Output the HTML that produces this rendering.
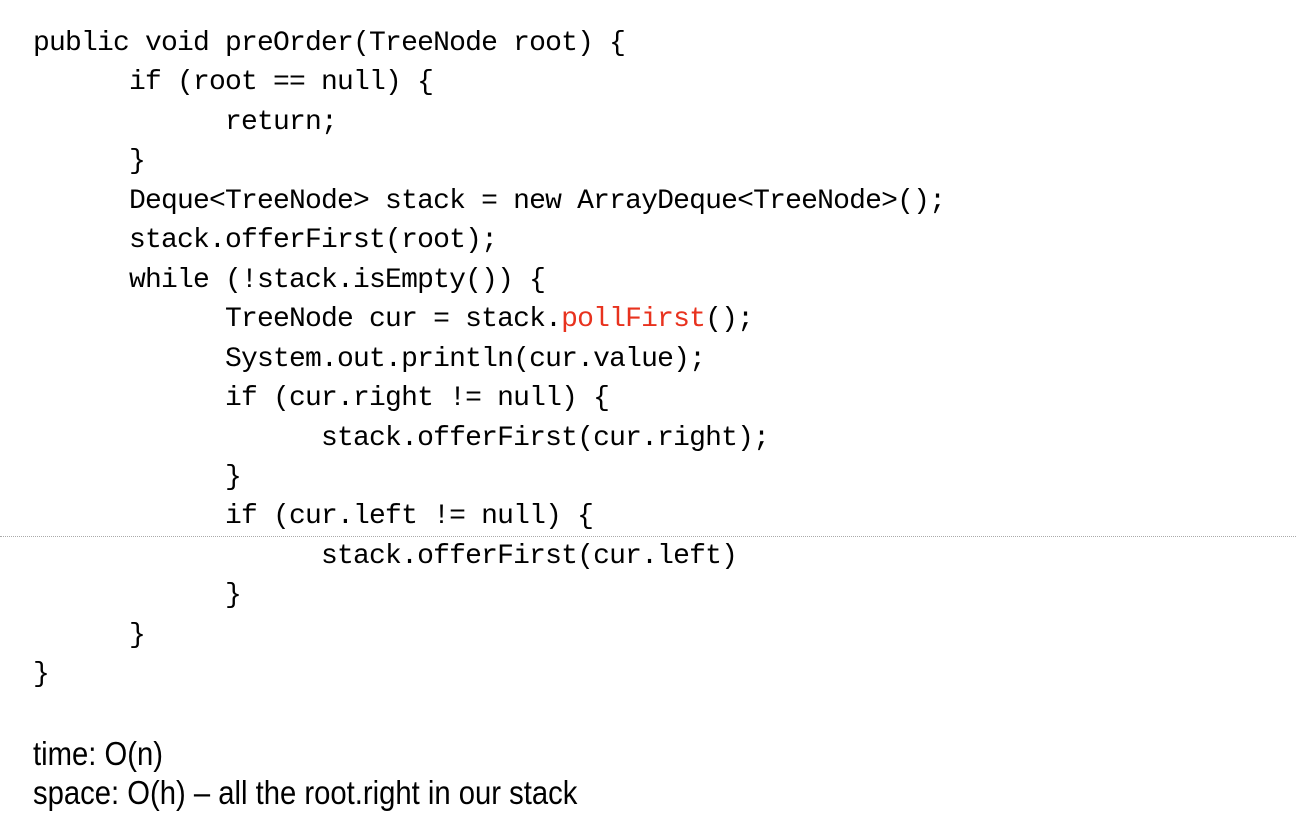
<!DOCTYPE html>
<html><head><meta charset="utf-8"><style>
html,body{margin:0;padding:0;background:#fff;width:1296px;height:834px;overflow:hidden;position:relative}
.c{position:absolute;left:33px;top:24px;font-family:"Liberation Mono",monospace;font-size:28px;letter-spacing:-0.8px;line-height:39.45px;color:#000;white-space:pre}
.r{color:#e8321e}
.hr{position:absolute;left:0;top:536px;width:1296px;border-top:1.5px dotted #aaa}
.t{position:absolute;left:33px;font-family:"Liberation Sans",Arial,sans-serif;font-size:33px;line-height:33px;color:#000;white-space:pre;transform:scaleX(0.886);transform-origin:0 0}
</style></head><body>
<div class="c">public void preOrder(TreeNode root) {
      if (root == null) {
            return;
      }
      Deque&lt;TreeNode&gt; stack = new ArrayDeque&lt;TreeNode&gt;();
      stack.offerFirst(root);
      while (!stack.isEmpty()) {
            TreeNode cur = stack.<span class="r">pollFirst</span>();
            System.out.println(cur.value);
            if (cur.right != null) {
                  stack.offerFirst(cur.right);
            }
            if (cur.left != null) {
                  stack.offerFirst(cur.left)
            }
      }
}</div>
<div class="hr"></div>
<div class="t" style="top:737px">time: O(n)</div>
<div class="t" style="top:776px">space: O(h) – all the root.right in our stack</div>
</body></html>
